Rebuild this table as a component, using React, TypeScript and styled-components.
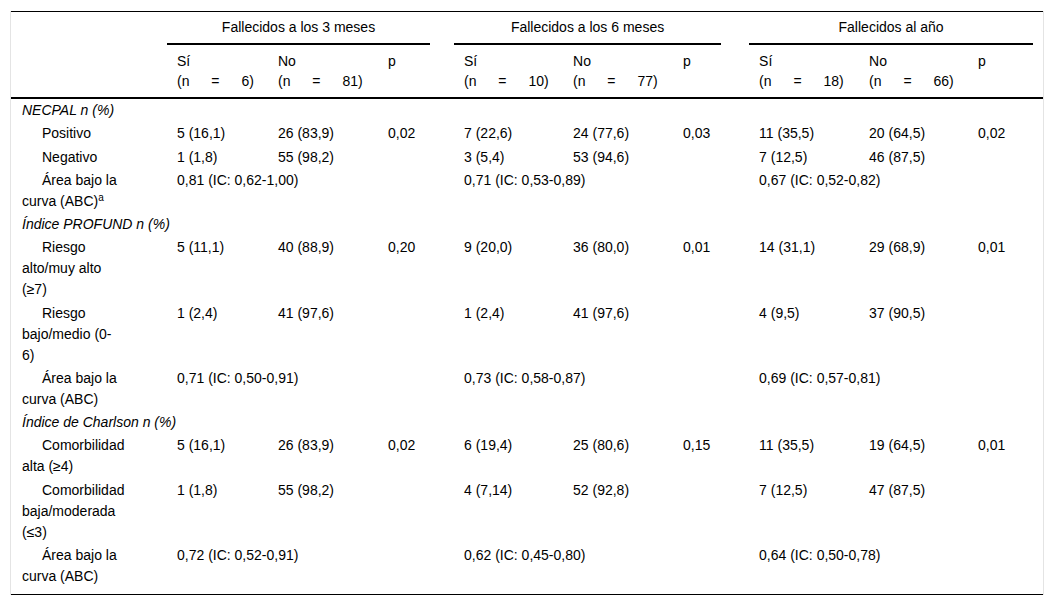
import * as React from 'react';
import styled, { createGlobalStyle } from 'styled-components';

type Cell = string | null;

type BodyRow =
  | { kind: 'section'; label: string }
  | { kind: 'item'; label: React.ReactNode; cells: Cell[] }
  | { kind: 'area'; label: React.ReactNode; values: string[] };

const GlobalStyle = createGlobalStyle`
  body {
    margin: 0;
    background: #ffffff;
    font-family: "Liberation Sans", Arial, sans-serif;
    color: #000000;
  }
`;

const Frame = styled.div`
  margin: 11px 0 0 10px;
  width: 1032px;
  border-left: 1px solid #e4e4e4;
  border-right: 1px solid #e4e4e4;
`;

const Table = styled.table`
  width: 1032px;
  border-collapse: collapse;
  table-layout: fixed;
  font-size: 14px;
  line-height: 21px;
  border-top: 1px solid #000;
  border-bottom: 1px solid #000;

  tbody tr:last-child td {
    padding-bottom: 7px;
  }
`;

const GroupCell = styled.th`
  padding: 0;
  font-weight: normal;
  line-height: 20px;
  vertical-align: bottom;
`;

const GroupLabel = styled.div<{ $trim: number }>`
  margin-right: ${p => p.$trim}px;
  padding: 5px 0 6px;
  text-align: center;
  border-bottom: 2px solid #000;
`;

const SubHeadRow = styled.tr`
  border-bottom: 2px solid #000;
`;

const SubHeadCell = styled.th`
  padding: 6px 0 6px 10px;
  font-weight: normal;
  line-height: 20px;
  text-align: left;
  vertical-align: top;
`;

const Count = styled.span`
  display: block;
  word-spacing: 18px;
  white-space: nowrap;
`;

const SectionCell = styled.td`
  padding: 1px 0 1.25px 11px;
  font-style: italic;
`;

const LabelCell = styled.td`
  padding: 1px 49px 1.25px 11px;
  vertical-align: top;
  text-indent: 20px;
`;

const ValueCell = styled.td`
  padding: 1px 0 1.25px 10px;
  vertical-align: top;
  white-space: nowrap;
`;

const Sup = styled.sup`
  font-size: 10px;
  line-height: 1;
  vertical-align: 5px;
`;

const widths = [156, 101, 110, 76, 109, 110, 76, 110, 109, 75];

const groups = [
  { title: 'Fallecidos a los 3 meses', trim: 24, yes: '6', no: '81' },
  { title: 'Fallecidos a los 6 meses', trim: 28, yes: '10', no: '77' },
  { title: 'Fallecidos al año', trim: 10, yes: '18', no: '66' },
];

const rows: BodyRow[] = [
  { kind: 'section', label: 'NECPAL n (%)' },
  { kind: 'item', label: 'Positivo', cells: ['5 (16,1)', '26 (83,9)', '0,02', '7 (22,6)', '24 (77,6)', '0,03', '11 (35,5)', '20 (64,5)', '0,02'] },
  { kind: 'item', label: 'Negativo', cells: ['1 (1,8)', '55 (98,2)', null, '3 (5,4)', '53 (94,6)', null, '7 (12,5)', '46 (87,5)', null] },
  {
    kind: 'area',
    label: (
      <>
        Área bajo la curva (ABC)<Sup>a</Sup>
      </>
    ),
    values: ['0,81 (IC: 0,62-1,00)', '0,71 (IC: 0,53-0,89)', '0,67 (IC: 0,52-0,82)'],
  },
  { kind: 'section', label: 'Índice PROFUND n (%)' },
  { kind: 'item', label: 'Riesgo alto/muy alto (≥7)', cells: ['5 (11,1)', '40 (88,9)', '0,20', '9 (20,0)', '36 (80,0)', '0,01', '14 (31,1)', '29 (68,9)', '0,01'] },
  { kind: 'item', label: 'Riesgo bajo/medio (0-6)', cells: ['1 (2,4)', '41 (97,6)', null, '1 (2,4)', '41 (97,6)', null, '4 (9,5)', '37 (90,5)', null] },
  { kind: 'area', label: 'Área bajo la curva (ABC)', values: ['0,71 (IC: 0,50-0,91)', '0,73 (IC: 0,58-0,87)', '0,69 (IC: 0,57-0,81)'] },
  { kind: 'section', label: 'Índice de Charlson n (%)' },
  { kind: 'item', label: 'Comorbilidad alta (≥4)', cells: ['5 (16,1)', '26 (83,9)', '0,02', '6 (19,4)', '25 (80,6)', '0,15', '11 (35,5)', '19 (64,5)', '0,01'] },
  { kind: 'item', label: 'Comorbilidad baja/moderada (≤3)', cells: ['1 (1,8)', '55 (98,2)', null, '4 (7,14)', '52 (92,8)', null, '7 (12,5)', '47 (87,5)', null] },
  { kind: 'area', label: 'Área bajo la curva (ABC)', values: ['0,72 (IC: 0,52-0,91)', '0,62 (IC: 0,45-0,80)', '0,64 (IC: 0,50-0,78)'] },
];

const renderRow = (row: BodyRow, i: number) => {
  if (row.kind === 'section') {
    return (
      <tr key={i}>
        <SectionCell colSpan={10}>{row.label}</SectionCell>
      </tr>
    );
  }
  if (row.kind === 'item') {
    return (
      <tr key={i}>
        <LabelCell>{row.label}</LabelCell>
        {row.cells.map((c, j) => (
          <ValueCell key={j}>{c}</ValueCell>
        ))}
      </tr>
    );
  }
  return (
    <tr key={i}>
      <LabelCell>{row.label}</LabelCell>
      {row.values.map((v, j) => (
        <React.Fragment key={j}>
          <ValueCell colSpan={2}>{v}</ValueCell>
          <ValueCell />
        </React.Fragment>
      ))}
    </tr>
  );
};

export default function App() {
  return (
    <>
      <GlobalStyle />
      <Frame>
        <Table>
          <colgroup>
            {widths.map((w, i) => (
              <col key={i} style={{ width: w }} />
            ))}
          </colgroup>
          <thead>
            <tr>
              <GroupCell />
              {groups.map(g => (
                <GroupCell key={g.title} colSpan={3}>
                  <GroupLabel $trim={g.trim}>{g.title}</GroupLabel>
                </GroupCell>
              ))}
            </tr>
            <SubHeadRow>
              <SubHeadCell />
              {groups.map(g => (
                <React.Fragment key={g.title}>
                  <SubHeadCell>
                    Sí
                    <Count>(n = {g.yes})</Count>
                  </SubHeadCell>
                  <SubHeadCell>
                    No
                    <Count>(n = {g.no})</Count>
                  </SubHeadCell>
                  <SubHeadCell>p</SubHeadCell>
                </React.Fragment>
              ))}
            </SubHeadRow>
          </thead>
          <tbody>{rows.map(renderRow)}</tbody>
        </Table>
      </Frame>
    </>
  );
}
